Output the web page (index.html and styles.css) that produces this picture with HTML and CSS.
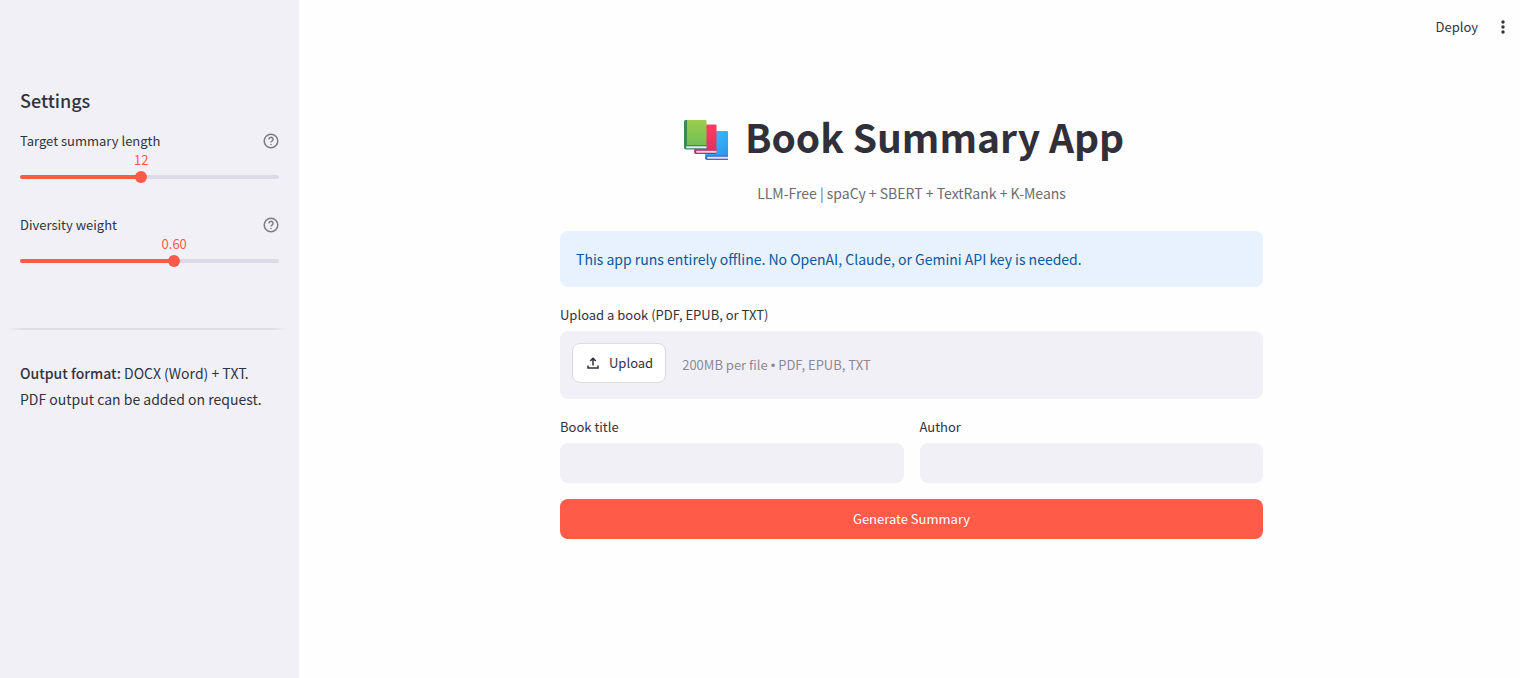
FILE: index.html
```html
<!DOCTYPE html>
<html lang="en">
<head>
  <meta charset="UTF-8">
  <meta name="viewport" content="width=device-width, initial-scale=1">
  <title>Book Summary App</title>
  <link rel="stylesheet" href="styles.css">
</head>
<body>

  <aside class="sidebar">
    <h2>Settings</h2>

    <div class="slider">
      <div class="slider-head">
        <label for="length">Target summary length</label>
        <button class="help" type="button" aria-label="Help for target summary length">
          <svg viewBox="0 0 16 16"><circle cx="8" cy="8" r="6.8"/><path d="M6 6.4a2 2 0 1 1 3.2 1.5C8.5 8.400 8 8.700 8 9.500"/><path d="M8 11.100v1"/></svg>
        </button>
      </div>
      <div class="slider-track" style="--value: 0.4667">
        <output for="length">12</output>
        <input type="range" id="length" min="5" max="20" value="12">
      </div>
    </div>

    <div class="slider">
      <div class="slider-head">
        <label for="diversity">Diversity weight</label>
        <button class="help" type="button" aria-label="Help for diversity weight">
          <svg viewBox="0 0 16 16"><circle cx="8" cy="8" r="6.8"/><path d="M6 6.4a2 2 0 1 1 3.2 1.5C8.5 8.400 8 8.700 8 9.500"/><path d="M8 11.100v1"/></svg>
        </button>
      </div>
      <div class="slider-track" style="--value: 0.6">
        <output for="diversity">0.60</output>
        <input type="range" id="diversity" min="0" max="1" step="0.05" value="0.6">
      </div>
    </div>

    <hr>

    <p class="note"><strong>Output format:</strong> DOCX (Word) + TXT.<br>PDF output can be added on request.</p>
  </aside>

  <div class="page">
    <header class="toolbar">
      <button class="deploy" type="button">Deploy</button>
      <button class="menu" type="button" aria-label="Main menu">
        <svg viewBox="0 0 16 16"><circle cx="8" cy="3" r="1.7"/><circle cx="8" cy="8" r="1.7"/><circle cx="8" cy="13" r="1.7"/></svg>
      </button>
    </header>

    <main class="content">
      <h1>
        <svg class="books" viewBox="0 -8 46 50" aria-hidden="true">
          <defs>
            <linearGradient id="green" x1="0" y1="0" x2="0" y2="1"><stop offset="0" stop-color="#9ccb4c"/><stop offset="1" stop-color="#6cbe58"/></linearGradient>
            <linearGradient id="red" x1="0" y1="0" x2="0" y2="1"><stop offset="0" stop-color="#ff3d5c"/><stop offset="1" stop-color="#dc2f68"/></linearGradient>
            <linearGradient id="blue" x1="0" y1="0" x2="1" y2="1"><stop offset="0" stop-color="#38c6ff"/><stop offset="1" stop-color="#2c94e8"/></linearGradient>
          </defs>
          <path d="M24 12h20q1 0 1 1v25H24q-2 0-2-2V14q0-2 2-2z" fill="url(#blue)"/>
          <path d="M24 36.500h21v4.500H24q-2 0-2-2.200t2-2.300z" fill="#4668c4"/>
          <path d="M24.500 37.700H45v2H24.500q-1-1 0-2z" fill="#dfe2fa"/>
          <path d="M13 5.500h19.500q1 0 1 1V32H13q-2 0-2-2V7.500q0-2 2-2z" fill="url(#red)"/>
          <path d="M13 30.500h20.500V35H13q-2 0-2-2.200t2-2.300z" fill="#c02a60"/>
          <path d="M13.500 31.700h20v2h-20q-1-1 0-2z" fill="#f4d3e4"/>
          <path d="M3 1h19.500q1 0 1 1v25H3q-2 0-2 2V3q0-2 2-2z" fill="url(#green)"/>
          <path d="M3 1h1v26H3q-2 0-2 2V3q0-2 2-2z" fill="#3e8750"/>
          <path d="M3 26h20.500v4.500H3q-2 0-2-2.200T3 26z" fill="#3c8965"/>
          <path d="M3.500 27.200h20v2h-20q-1-1 0-2z" fill="#e3ecee"/>
        </svg>
        <span>Book Summary App</span>
      </h1>
      <p class="subtitle">LLM-Free | spaCy + SBERT + TextRank + K-Means</p>

      <form class="form">
        <div class="info">This app runs entirely offline. No OpenAI, Claude, or Gemini API key is needed.</div>

        <div class="field">
          <label for="book">Upload a book (PDF, EPUB, or TXT)</label>
          <div class="dropzone">
            <input type="file" id="book" accept=".pdf,.epub,.txt" hidden>
            <button class="upload" type="button">
              <svg viewBox="0 0 16 16"><path d="M8 10.500V3.500M5.200 6 8 3.200 10.800 6M3 10.500v2.500h10v-2.500"/></svg>
              Upload
            </button>
            <span class="hint">200MB per file <span class="dot">•</span> PDF, EPUB, TXT</span>
          </div>
        </div>

        <div class="columns">
          <div class="field">
            <label for="title">Book title</label>
            <input type="text" id="title">
          </div>
          <div class="field">
            <label for="author">Author</label>
            <input type="text" id="author">
          </div>
        </div>

        <button class="generate" type="button">Generate Summary</button>
      </form>
    </main>
  </div>

  <script>
    const fileInput = document.getElementById('book');

    document.querySelector('.upload').addEventListener('click', () => {
      fileInput.click();
    });

    // Keep the value label above the thumb
    document.querySelectorAll('.slider-track').forEach(track => {
      const input = track.querySelector('input');
      const output = track.querySelector('output');
      input.addEventListener('input', () => {
        track.style.setProperty('--value', (input.value - input.min) / (input.max - input.min));
        output.textContent = input.step ? Number(input.value).toFixed(2) : input.value;
      });
    });
  </script>

</body>
</html>
```
FILE: styles.css
```css
* {
  box-sizing: border-box;
  margin: 0;
  padding: 0;
}

body {
  display: flex;
  min-height: 100vh;
  font-family: "Noto Sans CJK SC", "Noto Sans", sans-serif;
  font-size: 14px;
  line-height: 24px;
  color: #31333f;
  background-color: #fefefe;
}

button,
input {
  font: inherit;
  color: inherit;
}

button {
  border: none;
  background: none;
  cursor: pointer;
}

svg {
  display: block;
}

label,
.slider-head,
.deploy,
.upload,
.hint,
.generate {
  font-size: 13px;
}

/* Sidebar */
.sidebar {
  flex: 0 0 299px;
  padding: 88px 20px 20px;
  background-color: #f1f0f7;
}

.sidebar h2 {
  margin-bottom: 17px;
  font-size: 18px;
  font-weight: 500;
}

.slider {
  margin-bottom: 30px;
}

.slider-head {
  display: flex;
  justify-content: space-between;
  align-items: center;
  height: 24px;
}

.help svg {
  width: 16px;
  height: 16px;
  fill: none;
  stroke: #7c7c86;
  stroke-width: 1.5;
}

.slider-track {
  position: relative;
  padding-top: 18px;
}

.slider-track output {
  position: absolute;
  top: -3px;
  left: calc(6px + (100% - 12px) * var(--value));
  transform: translateX(-50%);
  font-size: 13px;
  line-height: 20px;
  color: #ff5a4a;
}

.slider-track input {
  display: block;
  width: 100%;
  height: 12px;
  appearance: none;
  background: none;
  cursor: pointer;
}

.slider-track input::-webkit-slider-runnable-track {
  height: 4px;
  border-radius: 4px;
  background: linear-gradient(to right, #ff5a4a calc(6px + (100% - 12px) * var(--value)), #dcdbe5 0);
}

.slider-track input::-webkit-slider-thumb {
  appearance: none;
  width: 12px;
  height: 12px;
  margin-top: -4px;
  border-radius: 50%;
  background-color: #ff5a4a;
}

.sidebar hr {
  height: 2px;
  margin: 61px -8px 30px -12px;
  border: none;
  background: linear-gradient(to right, transparent, #dddce4 16px, #dddce4 calc(100% - 16px), transparent);
}

.note {
  line-height: 26px;
}

.note strong {
  font-weight: 500;
}

/* Page */
.page {
  flex: 1;
  padding-left: 4px;
}

.toolbar {
  display: flex;
  justify-content: flex-end;
  align-items: center;
  gap: 16px;
  height: 54px;
  padding-right: 8px;
}

.menu svg {
  width: 18px;
  height: 16px;
  fill: #31333f;
}

.content {
  max-width: 703px;
  margin: 0 auto;
  padding: 54px 0 40px;
}

h1 {
  display: flex;
  justify-content: center;
  align-items: center;
  gap: 16px;
  padding-right: 16px;
  font-size: 39px;
  font-weight: 700;
  line-height: 56px;
  color: #31303a;
}

.books {
  width: 46px;
  height: 50px;
}

.subtitle {
  margin: 17px 0 26px;
  text-align: center;
  color: #6c6b74;
}

.form {
  display: flex;
  flex-direction: column;
  gap: 16px;
}

.info {
  padding: 16px;
  border-radius: 8px;
  background-color: #e8f1fe;
  color: #0a58a0;
}

.field {
  flex: 1;
}

.field label {
  display: block;
  margin-bottom: 4px;
}

.dropzone {
  display: flex;
  align-items: center;
  gap: 16px;
  min-height: 68px;
  padding: 12px;
  border-radius: 8px;
  background-color: #f2f0f7;
}

.upload {
  display: flex;
  align-items: center;
  align-self: flex-start;
  gap: 8px;
  height: 40px;
  padding: 0 12px;
  border: 1px solid #dcdbe3;
  border-radius: 8px;
  background-color: #fff;
}

.upload svg {
  width: 16px;
  height: 16px;
  fill: none;
  stroke: #31333f;
  stroke-width: 1.5;
}

.hint {
  color: #8b8a94;
}

.dot {
  font-family: "Liberation Sans", sans-serif;
}

.columns {
  display: flex;
  gap: 16px;
}

.field input[type="text"] {
  display: block;
  width: 100%;
  height: 40px;
  padding: 0 12px;
  border: none;
  border-radius: 8px;
  background-color: #f2f0f7;
}

.generate {
  height: 40px;
  border-radius: 8px;
  background-color: #ff5b49;
  color: #fff;
}

@media (max-width: 800px) {
  body {
    flex-direction: column;
  }

  .sidebar {
    flex: none;
    padding-top: 24px;
  }

  .content {
    padding: 16px;
  }
}
```
